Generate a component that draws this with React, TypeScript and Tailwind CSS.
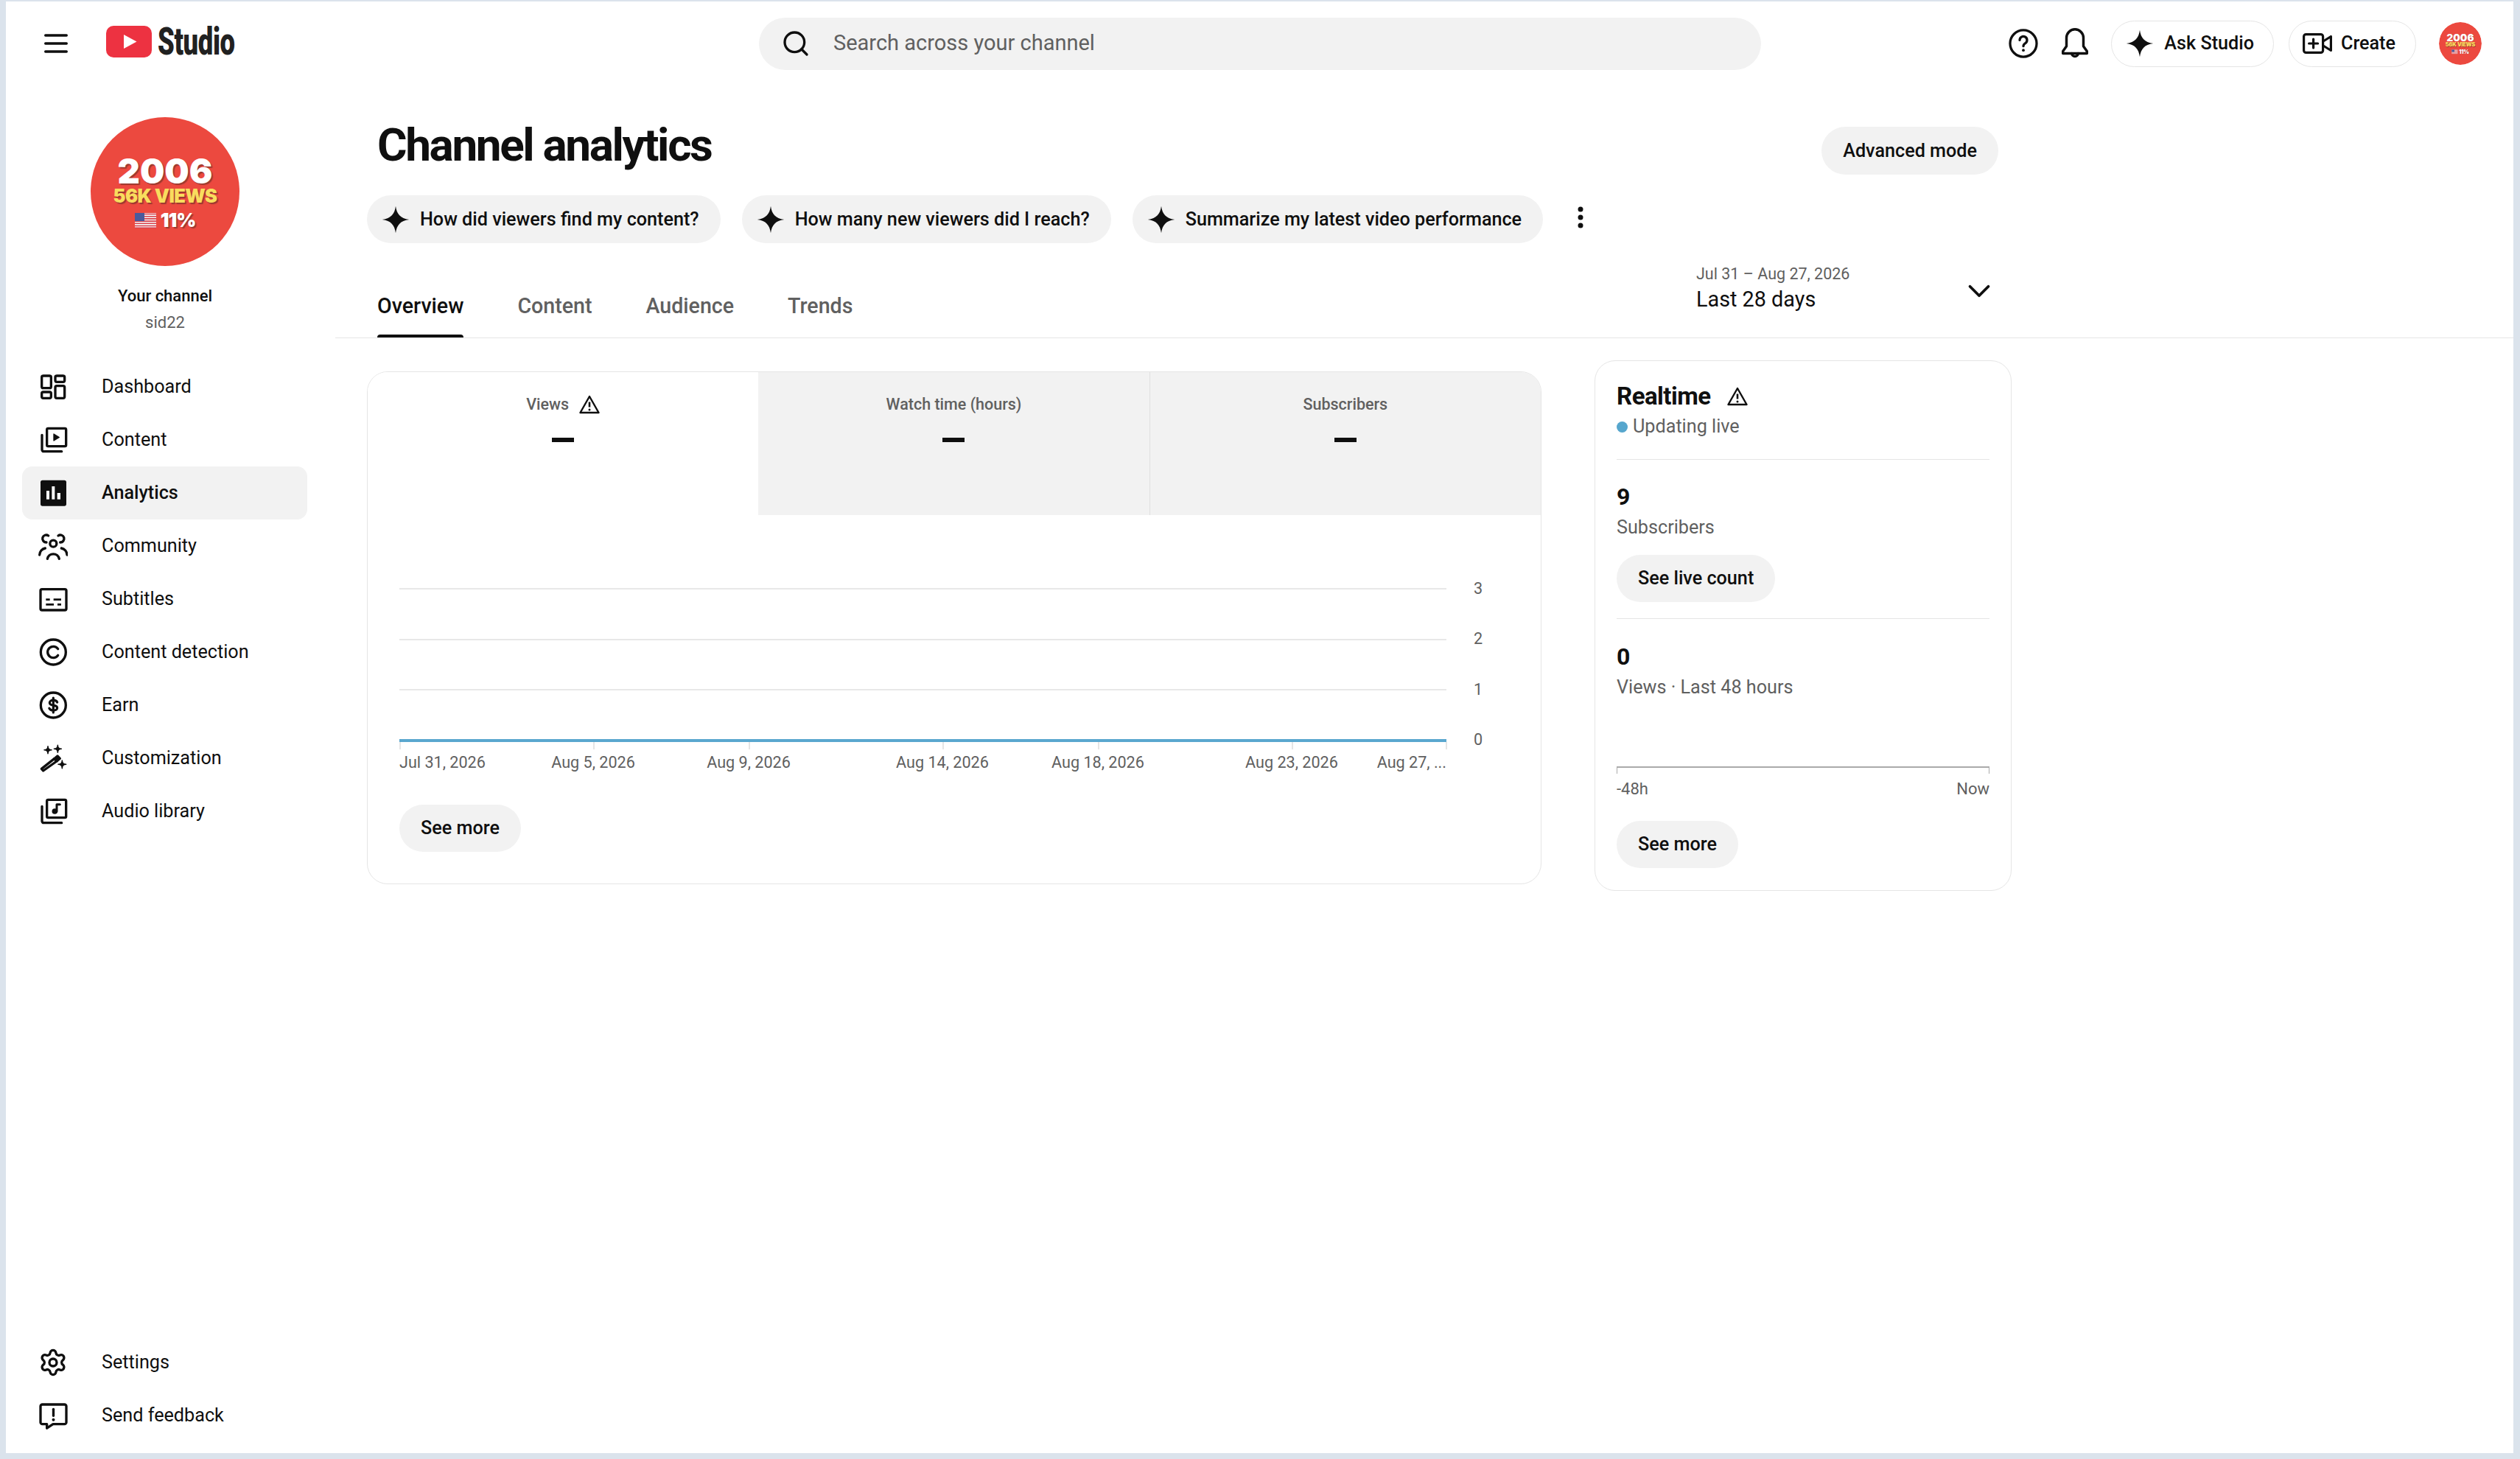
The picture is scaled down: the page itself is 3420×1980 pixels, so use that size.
import { Search, Settings, ChevronDown } from "lucide-react";
import type { ReactNode } from "react";

function Ico({ children, className = "w-10 h-10" }: { children: ReactNode; className?: string }) {
  return (
    <svg viewBox="0 0 24 24" fill="none" stroke="#0f0f0f" strokeWidth={2} strokeLinecap="round" strokeLinejoin="round" className={`shrink-0 ${className}`}>
      {children}
    </svg>
  );
}

const star = (x: number, y: number, r: number) =>
  `M${x} ${y - r}Q${x} ${y} ${x + r} ${y}Q${x} ${y} ${x} ${y + r}Q${x} ${y} ${x - r} ${y}Q${x} ${y} ${x} ${y - r}Z`;

function Sparkle({ className = "w-[38px] h-[38px]" }: { className?: string }) {
  return (
    <svg viewBox="0 0 24 24" className={`shrink-0 ${className}`}>
      <path d="M12 0.5C12.9 7.3 16 11 23.5 12C16 13 12.9 16.7 12 23.5C11.1 16.7 8 13 0.5 12C8 11 11.1 7.3 12 0.5Z" fill="#0f0f0f" />
    </svg>
  );
}

function Warn({ className = "w-[28px] h-[26px]" }: { className?: string }) {
  return (
    <svg viewBox="0 0 28 26" fill="none" stroke="#0f0f0f" strokeWidth={2.4} strokeLinejoin="round" className={`shrink-0 ${className}`}>
      <path d="M14 2L26.5 24H1.5Z" />
      <path d="M14 9.5V16.5" strokeWidth={2.6} />
      <circle cx="14" cy="20" r="1.5" fill="#0f0f0f" stroke="none" />
    </svg>
  );
}

function Avatar() {
  return (
    <div className="w-[202px] h-[202px] rounded-full bg-[#ec493f] flex flex-col items-center font-['Inter',sans-serif] font-black leading-none [text-shadow:2px_2px_1px_#9c3a30]">
      <span className="mt-[52px] text-white text-[47px] leading-[42px]">2006</span>
      <span className="text-[#f8dd5e] text-[25.5px] leading-[26px] whitespace-nowrap tracking-[-0.6px]">56K VIEWS</span>
      <div className="flex items-center gap-[6px] mt-[7px]">
        <svg viewBox="0 0 29 21" className="w-[29px] h-[21px]">
          <rect width="29" height="21" fill="#f4f4f4" />
          <path d="M0 1.5H29M0 4.7H29M0 7.9H29M0 11.1H29M0 14.3H29M0 17.5H29M0 20.2H29" stroke="#d9414b" strokeWidth="1.6" />
          <rect width="13" height="11" fill="#4a5a9c" />
        </svg>
        <span className="text-white text-[26px] leading-[26px] tracking-[-1px]">11%</span>
      </div>
    </div>
  );
}

const nav: { label: string; icon: ReactNode; active?: boolean }[] = [
  {
    label: "Dashboard",
    icon: (
      <Ico>
        <rect x="2.8" y="3" width="7.6" height="10" rx="1.2" />
        <rect x="13.8" y="3" width="7.6" height="5" rx="1.2" />
        <rect x="2.8" y="16.2" width="7.6" height="5" rx="1.2" />
        <rect x="13.8" y="11.2" width="7.6" height="10" rx="1.2" />
      </Ico>
    ),
  },
  {
    label: "Content",
    icon: (
      <Ico>
        <rect x="7" y="2.6" width="15.6" height="14.6" rx="1" />
        <path d="M3 8v12a1.4 1.4 0 0 0 1.4 1.4H19" />
        <path d="M12.6 7.2L17 9.9L12.6 12.6Z" fill="#0f0f0f" strokeWidth={0.8} />
      </Ico>
    ),
  },
  {
    label: "Analytics",
    active: true,
    icon: (
      <svg viewBox="0 0 24 24" className="w-10 h-10 shrink-0">
        <rect x="1.8" y="1.6" width="21" height="21" rx="1.6" fill="#0f0f0f" />
        <rect x="6.6" y="10.2" width="2.4" height="7" fill="#fff" />
        <rect x="11" y="6.6" width="2.4" height="10.6" fill="#fff" />
        <rect x="15.4" y="12" width="2.6" height="5.2" fill="#fff" />
      </svg>
    ),
  },
  {
    label: "Community",
    icon: (
      <Ico>
        <circle cx="12.2" cy="10" r="2.7" />
        <path d="M7.4 22.4a4.9 4.9 0 0 1 9.6 0" />
        <path d="M8.2 3.6a3 3 0 1 0-1.6 5.4" />
        <path d="M16.2 3.6a3 3 0 1 1 1.6 5.4" />
        <path d="M1 19.2a5.8 5.8 0 0 1 4.6-5.4" />
        <path d="M23.4 19.2a5.8 5.8 0 0 0-4.6-5.4" />
      </Ico>
    ),
  },
  {
    label: "Subtitles",
    icon: (
      <Ico>
        <rect x="1.8" y="4" width="21" height="17" rx="1.2" />
        <path d="M6.2 12.4h3.2M12.4 12.4h6.2M6.2 16.4h6.4M15.6 16.4h3" strokeWidth={1.7} strokeLinecap="butt" />
      </Ico>
    ),
  },
  {
    label: "Content detection",
    icon: (
      <Ico>
        <circle cx="12.2" cy="12" r="10.2" />
        <path d="M16 9.4a4.6 4.6 0 1 0 0 5.2" />
      </Ico>
    ),
  },
  {
    label: "Earn",
    icon: (
      <Ico>
        <circle cx="12.2" cy="12" r="10.2" />
        <path d="M15.4 9.6c-.5-1.1-1.7-1.7-3.2-1.7-1.8 0-3 .9-3 2.1 0 1.3 1.2 1.8 3 2.1s3.2.9 3.2 2.2c0 1.2-1.4 2-3.2 2-1.6 0-2.8-.7-3.3-1.8M12.2 6v12" strokeWidth={1.9} />
      </Ico>
    ),
  },
  {
    label: "Customization",
    icon: (
      <Ico>
        <path d="M4 22.2L2.6 20.6L13 12.4L15 14.4Z" />
        <path d="M13 12.4L15.6 10.2L17.6 12.2L15 14.4Z" fill="#0f0f0f" />
        <path d={star(7.8, 5.2, 3)} fill="#0f0f0f" strokeWidth={0.9} />
        <path d={star(15.8, 4.4, 3)} fill="#0f0f0f" strokeWidth={0.9} />
        <path d={star(19.4, 17, 3.2)} fill="#0f0f0f" strokeWidth={0.9} />
      </Ico>
    ),
  },
  {
    label: "Audio library",
    icon: (
      <Ico>
        <rect x="7" y="2.6" width="15.6" height="14.6" rx="1" />
        <path d="M3 8v12a1.4 1.4 0 0 0 1.4 1.4H19" />
        <circle cx="13.4" cy="12" r="1.8" fill="#0f0f0f" strokeWidth={1} />
        <path d="M15 12V6.4h2.6" strokeWidth={1.8} />
      </Ico>
    ),
  },
];

function NavRow({ label, icon, active }: { label: string; icon: ReactNode; active?: boolean }) {
  return (
    <div className={`flex items-center h-[72px] w-[387px] ml-[22px] pl-[22px] gap-[46px] rounded-[14px] text-[25.2px] text-[#0f0f0f] ${active ? "bg-[#f2f2f2] font-medium" : ""}`}>
      {icon}
      <span>{label}</span>
    </div>
  );
}

function GreyButton({ children, className = "" }: { children: ReactNode; className?: string }) {
  return <div className={`inline-flex items-center justify-center rounded-full bg-[#f2f2f2] h-[64px] px-[29px] text-[25.2px] font-medium text-[#0f0f0f] whitespace-nowrap ${className}`}>{children}</div>;
}

function OutlineButton({ children }: { children: ReactNode }) {
  return <div className="flex items-center h-[63px] rounded-full border border-[#e5e5e5] text-[25.2px] font-medium text-[#0f0f0f]">{children}</div>;
}

function Chip({ text }: { text: string }) {
  return (
    <div className="flex items-center h-[65px] rounded-full bg-[#f2f2f2] pl-[20px] pr-[29px] gap-[14px] text-[25.2px] font-medium text-[#0f0f0f] whitespace-nowrap">
      <Sparkle />
      <span>{text}</span>
    </div>
  );
}

function MetricTab({ label, active, warn }: { label: string; active?: boolean; warn?: boolean }) {
  return (
    <div className={`flex-1 h-[194px] flex flex-col items-center pt-[29px] ${active ? "bg-white" : "bg-[#f2f2f2]"}`}>
      <div className="flex items-center gap-[14px] h-[30px] text-[21.5px] font-medium text-[#606060]">
        <span>{label}</span>
        {warn && <Warn />}
      </div>
      <div className="w-[30px] h-[6px] bg-[#0f0f0f] mt-[30px]" />
    </div>
  );
}

const ticks = [
  { x: 0, label: "Jul 31, 2026", align: "left" },
  { x: 263, label: "Aug 5, 2026", align: "center" },
  { x: 474, label: "Aug 9, 2026", align: "center" },
  { x: 737, label: "Aug 14, 2026", align: "center" },
  { x: 948, label: "Aug 18, 2026", align: "center" },
  { x: 1211, label: "Aug 23, 2026", align: "center" },
  { x: 1420, label: "Aug 27, ...", align: "right" },
];

function ChartRow({ value, blue }: { value: string; blue?: boolean }) {
  return (
    <div className="flex items-center h-[34px]">
      <div className={`w-[1421px] ${blue ? "h-[4px] bg-[#5aa7cf]" : "h-[2px] bg-[#e8e8e8]"}`} />
      <span className="ml-[37px] text-[21.6px] text-[#606060]">{value}</span>
    </div>
  );
}

export default function App() {
  return (
    <div className="w-[3420px] h-[1980px] bg-[#dbe3ec] pl-2 pr-[9px] pt-[2px] pb-2 font-['Roboto',sans-serif] text-[#0f0f0f] overflow-hidden">
      <div className="w-full h-full bg-white flex flex-col">
        {/* top bar */}
        <header className="h-[114px] flex items-center shrink-0">
          <svg viewBox="0 0 32 26" className="w-[32px] h-[26px] ml-[52px]" stroke="#0f0f0f" strokeWidth={3.4} strokeLinecap="round">
            <path d="M1.7 2H30.3M1.7 13H30.3M1.7 24H30.3" />
          </svg>
          <div className="flex items-center ml-[52px] mb-[5px] w-[176px]">
            <svg viewBox="0 0 62 43" className="w-[62px] h-[43px] shrink-0">
              <rect width="62" height="43" rx="10" fill="#ed3241" />
              <path d="M24 12L41.5 21.5L24 31Z" fill="#fff" />
            </svg>
            <span className="ml-[8px] text-[52px] leading-[52px] font-black text-[#212121] tracking-[-0.5px] scale-x-[0.7] origin-left whitespace-nowrap">Studio</span>
          </div>
          <div className="ml-[710px] w-[1360px] h-[71px] rounded-full bg-[#f2f2f2] flex items-center pl-[30px] gap-[31px]">
            <Search className="w-[40px] h-[40px]" strokeWidth={2} color="#0f0f0f" />
            <span className="text-[29px] text-[#606060]">Search across your channel</span>
          </div>
          <div className="ml-auto flex items-center mr-[43px]">
            <Ico className="w-[46px] h-[46px]">
              <circle cx="12" cy="12" r="9.4" strokeWidth={1.7} />
              <path d="M9.4 9.6a2.6 2.6 0 1 1 4 2.2c-.9.6-1.4 1.1-1.4 2.1" strokeWidth={1.7} />
              <circle cx="12" cy="16.8" r="1" fill="#0f0f0f" stroke="none" />
            </Ico>
            <Ico className="w-[46px] h-[46px] ml-[24px]">
              <path d="M12 2a6 6 0 0 0-6 6v6L3.5 17.5V19h17v-1.5L18 14V8a6 6 0 0 0-6-6z" strokeWidth={1.8} />
              <path d="M9.8 19a2.2 2.2 0 0 0 4.4 0" strokeWidth={1.8} />
            </Ico>
            <div className="ml-[26px]">
              <OutlineButton>
                <div className="flex items-center pl-[19px] pr-[26px] gap-[14px]">
                  <Sparkle />
                  <span>Ask Studio</span>
                </div>
              </OutlineButton>
            </div>
            <div className="ml-[20px]">
              <OutlineButton>
                <div className="flex items-center pl-[18px] pr-[27px] gap-[12px]">
                  <svg viewBox="0 0 40 28" fill="none" stroke="#0f0f0f" strokeWidth={3.2} strokeLinejoin="round" strokeLinecap="round" className="w-[40px] h-[28px]">
                    <rect x="1.6" y="1.6" width="26" height="24.8" rx="3" />
                    <path d="M14.6 8V20M8.6 14H20.6" />
                    <path d="M28 11L38.4 4.5V23.5L28 17" />
                  </svg>
                  <span>Create</span>
                </div>
              </OutlineButton>
            </div>
            <div className="w-[58px] h-[58px] ml-[31px] overflow-hidden rounded-full">
              <div className="origin-top-left scale-[0.287]">
                <Avatar />
              </div>
            </div>
          </div>
        </header>

        <div className="flex-1 flex min-h-0">
          {/* sidebar */}
          <aside className="w-[447px] shrink-0 flex flex-col">
            <div className="w-[432px] flex flex-col items-center pt-[43px]">
              <Avatar />
              <span className="mt-[27px] text-[22px] leading-[28px] font-medium">Your channel</span>
              <span className="mt-[8px] text-[22px] leading-[28px] text-[#606060]">sid22</span>
            </div>
            <nav className="mt-[37px] flex flex-col">
              {nav.map((n) => (
                <NavRow key={n.label} {...n} />
              ))}
            </nav>
            <div className="mt-auto pb-[15px] flex flex-col">
              <NavRow
                label="Settings"
                icon={
                  <div className="w-10 h-10 flex items-center justify-center shrink-0">
                    <Settings className="w-[40px] h-[40px]" strokeWidth={2} color="#0f0f0f" />
                  </div>
                }
              />
              <NavRow
                label="Send feedback"
                icon={
                  <Ico>
                    <path d="M3.3 3h18a1.5 1.5 0 0 1 1.5 1.5v13a1.5 1.5 0 0 1-1.5 1.5H12L7 22.3V19H3.3a1.5 1.5 0 0 1-1.5-1.5v-13A1.5 1.5 0 0 1 3.3 3z" />
                    <path d="M12.3 6.8v5.4" />
                    <circle cx="12.3" cy="15.4" r="1.2" fill="#0f0f0f" stroke="none" />
                  </Ico>
                }
              />
            </div>
          </aside>

          {/* main */}
          <main className="flex-1 flex flex-col min-w-0">
            <div className="w-[2257px] pt-[41px]">
              <div className="flex justify-between items-start pl-[57px]">
                <h1 className="text-[62px] leading-[80px] font-bold tracking-[-2.35px] whitespace-nowrap">Channel analytics</h1>
                <GreyButton className="mt-[15px] h-[65px]">Advanced mode</GreyButton>
              </div>
              <div className="flex items-center gap-[29px] pl-[43px] mt-[28px]">
                <Chip text="How did viewers find my content?" />
                <Chip text="How many new viewers did I reach?" />
                <Chip text="Summarize my latest video performance" />
                <svg viewBox="0 0 8 30" className="w-[8px] h-[30px] ml-[18px] mb-[5px]" fill="#0f0f0f">
                  <circle cx="4" cy="4" r="3.5" />
                  <circle cx="4" cy="15" r="3.5" />
                  <circle cx="4" cy="26" r="3.5" />
                </svg>
              </div>
            </div>
            <div className="h-[129px] border-b border-[#e5e5e5] shrink-0">
              <div className="w-[2257px] h-full flex justify-between pl-[57px]">
                <div className="flex gap-[73px] items-end h-full text-[28.6px] font-medium">
                  {["Overview", "Content", "Audience", "Trends"].map((t, i) => (
                    <div key={t} className={`relative h-[88px] pt-[2px] flex items-center ${i === 0 ? "text-[#0f0f0f]" : "text-[#606060]"}`}>
                      {t}
                      {i === 0 && <span className="absolute left-0 bottom-0 w-[117px] h-[4px] rounded-t-sm bg-[#0f0f0f]" />}
                    </div>
                  ))}
                </div>
                <div className="w-[397px] mr-[13px] mt-[27px] flex justify-between items-center self-start">
                  <div className="flex flex-col">
                    <span className="text-[21.5px] leading-[30px] text-[#606060]">Jul 31 – Aug 27, 2026</span>
                    <span className="text-[28.8px] leading-[38px]">Last 28 days</span>
                  </div>
                  <ChevronDown className="w-[50px] h-[50px] mr-[-12px] mt-[8px]" strokeWidth={1.8} color="#0f0f0f" />
                </div>
              </div>
            </div>

            <div className="flex items-start gap-[72px] pl-[43px] pt-[30px]">
              {/* main chart card */}
              <section className="w-[1594px] h-[696px] mt-[15px] rounded-[28px] border border-[#e5e5e5] overflow-hidden shrink-0">
                <div className="flex">
                  <MetricTab label="Views" active warn />
                  <MetricTab label="Watch time (hours)" />
                  <div className="w-px bg-[#e0e0e0]" />
                  <MetricTab label="Subscribers" />
                </div>
                <div className="pl-[43px] pt-[83px]">
                  <div className="flex flex-col gap-[34.5px]">
                    <ChartRow value="3" />
                    <ChartRow value="2" />
                    <ChartRow value="1" />
                    <ChartRow value="0" blue />
                  </div>
                  <div className="relative w-[1421px] h-[44px] mt-[-15px]">
                    {ticks.map((t) => (
                      <div key={t.label}>
                        <div className="absolute top-0 w-[2px] h-[10px] bg-[#e5e5e5]" style={{ left: t.x }} />
                        <span
                          className={`absolute top-[14px] text-[21.6px] leading-[28px] text-[#606060] whitespace-nowrap ${t.align === "center" ? "-translate-x-1/2" : t.align === "right" ? "-translate-x-full" : ""}`}
                          style={{ left: t.x + (t.align === "right" ? 1 : 0) }}
                        >
                          {t.label}
                        </span>
                      </div>
                    ))}
                  </div>
                  <GreyButton className="mt-[41px]">See more</GreyButton>
                </div>
              </section>

              {/* realtime card */}
              <section className="w-[566px] h-[720px] rounded-[28px] border border-[#e5e5e5] px-[29px] shrink-0">
                <div className="flex items-center gap-[22px] mt-[28px] h-[40px]">
                  <span className="text-[33px] font-bold tracking-[-0.5px]">Realtime</span>
                  <Warn />
                </div>
                <div className="flex items-center gap-[7px] h-[30px] mt-[6px] text-[25.2px] text-[#606060]">
                  <span className="w-[15px] h-[15px] rounded-full bg-[#56a6cd]" />
                  Updating live
                </div>
                <div className="h-px bg-[#e5e5e5] mt-[29px]" />
                <div className="text-[32px] leading-[40px] font-bold mt-[30px]">9</div>
                <div className="text-[25.2px] leading-[30px] text-[#606060] mt-[7px]">Subscribers</div>
                <GreyButton className="mt-[22px]">See live count</GreyButton>
                <div className="h-px bg-[#e5e5e5] mt-[22px]" />
                <div className="text-[32px] leading-[40px] font-bold mt-[31px]">0</div>
                <div className="text-[25.2px] leading-[30px] text-[#606060] mt-[7px]">Views · Last 48 hours</div>
                <div className="mt-[92px] h-[10px] border-t-2 border-x border-[#aaaaaa]" />
                <div className="flex justify-between text-[22px] leading-[26px] text-[#606060] mt-[8px]">
                  <span>-48h</span>
                  <span>Now</span>
                </div>
                <GreyButton className="mt-[30px]">See more</GreyButton>
              </section>
            </div>
          </main>
        </div>
      </div>
    </div>
  );
}
